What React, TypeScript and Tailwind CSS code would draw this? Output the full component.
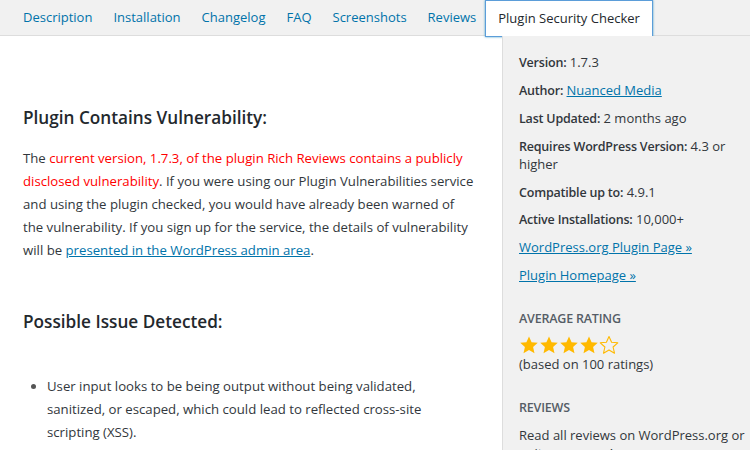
import React from "react";

const tabs = ["Description", "Installation", "Changelog", "FAQ", "Screenshots", "Reviews"];

function Star({ filled }: { filled: boolean }) {
  return (
    <svg width="20" height="20" viewBox="0 0 24 24" className="shrink-0">
      <path
        d="M12 1.8l3.1 6.9 7.4.7-5.6 5 1.7 7.4L12 17.9l-6.6 3.9 1.7-7.4-5.6-5 7.4-.7z"
        fill={filled ? "#ffb900" : "none"}
        stroke="#ffb900"
        strokeWidth={filled ? 0 : 1.3}
        strokeLinejoin="round"
      />
    </svg>
  );
}

function Meta({ label, children }: { label: string; children: React.ReactNode }) {
  return (
    <p className="leading-[18px]">
      <span className="font-semibold text-[12.5px] leading-none tracking-[-0.2px]">{label}</span> {children}
    </p>
  );
}

export default function App() {
  return (
    <div
      className="w-[750px] h-[450px] overflow-hidden bg-white text-[13px] text-[#32373c]"
      style={{ fontFamily: '"Open Sans", "Noto Sans", sans-serif' }}
    >
      {/* Tabs */}
      <div className="h-[36px] bg-[#f1f1f1] border-b border-[#dddddd] flex items-stretch gap-[21px] pl-[23px]">
        {tabs.map((t) => (
          <a key={t} className="flex items-center text-[#0073aa] pt-[1px]">
            {t}
          </a>
        ))}
        <div className="ml-[-12px] h-[37px] px-[12px] flex items-center pt-[1px] bg-white border border-[#5b9dd9] shadow-[0_0_2px_rgba(30,140,190,0.8)] text-[#23282d]">
          Plugin Security Checker
        </div>
      </div>

      <div className="flex h-[414px]">
        {/* Main */}
        <div className="w-[502px] shrink-0 pl-[23px] pr-[25px] pt-[70px]">
          <h2 className="text-[17.2px] font-semibold text-[#23282d] leading-[24px]">
            Plugin Contains Vulnerability:
          </h2>
          <p className="mt-[17px] text-[13.2px] leading-[23px]">
            The{" "}
            <span className="text-[#ff0000]">
              current version, 1.7.3, of the plugin Rich Reviews contains a publicly disclosed vulnerability
            </span>
            . If you were using our Plugin Vulnerabilities service and using the plugin checked, you would have already
            been warned of the vulnerability. If you sign up for the service, the details of vulnerability will be{" "}
            <a className="text-[#0073aa] underline">presented in the WordPress admin area</a>.
          </p>
          <h2 className="mt-[48px] text-[17.2px] font-semibold text-[#23282d] leading-[24px]">
            Possible Issue Detected:
          </h2>
          <ul className="mt-[41px] pl-[24px] mr-[30px] list-disc marker:text-[#555] text-[13.2px] leading-[23px]">
            <li>
              User input looks to be being output without being validated, sanitized, or escaped, which could lead to
              reflected cross-site scripting (XSS).
            </li>
          </ul>
        </div>

        {/* Sidebar */}
        <div className="flex-1 bg-[#f1f1f1] border-l border-[#dddddd] pl-[16px] pr-[3px] pt-[17px] flex flex-col">
          <div className="flex flex-col gap-[9.9px]">
            <Meta label="Version:">1.7.3</Meta>
            <Meta label="Author:">
              <a className="text-[#0073aa] underline">Nuanced Media</a>
            </Meta>
            <Meta label="Last Updated:">2 months ago</Meta>
            <Meta label="Requires WordPress Version:">4.3 or higher</Meta>
            <Meta label="Compatible up to:">4.9.1</Meta>
            <Meta label="Active Installations:">10,000+</Meta>
            <a className="leading-[18px] text-[#0073aa] underline">WordPress.org Plugin Page »</a>
            <a className="leading-[18px] text-[#0073aa] underline">Plugin Homepage »</a>
          </div>
          <h3 className="mt-[26px] text-[12.5px] tracking-[-0.2px] font-semibold uppercase text-[#555d66] leading-[18px]">
            Average Rating
          </h3>
          <div className="mt-[7px] flex">
            {[1, 2, 3, 4, 5].map((i) => (
              <Star key={i} filled={i <= 4} />
            ))}
          </div>
          <p className="leading-[18px]">(based on 100 ratings)</p>
          <h3 className="mt-[26px] text-[12.5px] tracking-[-0.2px] font-semibold uppercase text-[#555d66] leading-[18px]">
            Reviews
          </h3>
          <p className="mt-[9px] leading-[18px]">Read all reviews on WordPress.org or write your own!</p>
        </div>
      </div>
    </div>
  );
}
